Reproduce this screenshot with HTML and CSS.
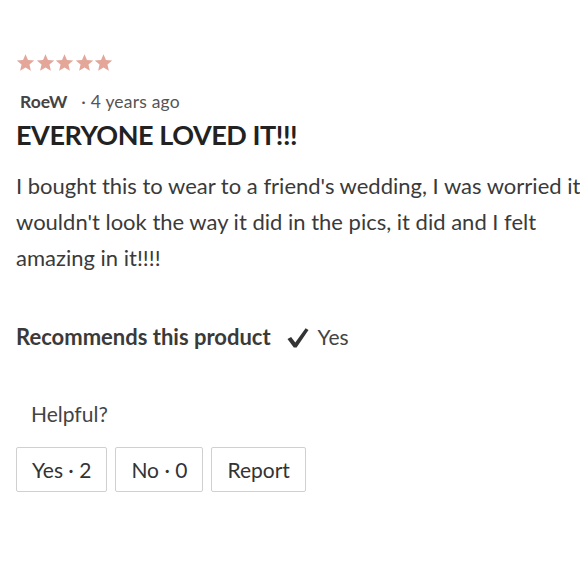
FILE: index.html
```html
<!DOCTYPE html>
<html>
<head>
<meta charset="utf-8">
<link rel="stylesheet" href="styles.css">
</head>
<body>
<div class="review">
  <div class="stars">
    <svg class="star" viewBox="0 0 24 24"><path d="M12 1.5l3.1 7.2 7.9.7-6 5.2 1.8 7.7L12 18.3l-6.8 4 1.8-7.7-6-5.2 7.9-.7z"/></svg>
    <svg class="star" viewBox="0 0 24 24"><path d="M12 1.5l3.1 7.2 7.9.7-6 5.2 1.8 7.7L12 18.3l-6.8 4 1.8-7.7-6-5.2 7.9-.7z"/></svg>
    <svg class="star" viewBox="0 0 24 24"><path d="M12 1.5l3.1 7.2 7.9.7-6 5.2 1.8 7.7L12 18.3l-6.8 4 1.8-7.7-6-5.2 7.9-.7z"/></svg>
    <svg class="star" viewBox="0 0 24 24"><path d="M12 1.5l3.1 7.2 7.9.7-6 5.2 1.8 7.7L12 18.3l-6.8 4 1.8-7.7-6-5.2 7.9-.7z"/></svg>
    <svg class="star" viewBox="0 0 24 24"><path d="M12 1.5l3.1 7.2 7.9.7-6 5.2 1.8 7.7L12 18.3l-6.8 4 1.8-7.7-6-5.2 7.9-.7z"/></svg>
  </div>
  <div class="meta"><span class="author">RoeW</span><span class="date">· 4 years ago</span></div>
  <h2 class="title">EVERYONE LOVED IT!!!</h2>
  <p class="body">I bought this to wear to a friend's wedding, I was worried it wouldn't look the way it did in the pics, it did and I felt amazing in it!!!!</p>
  <div class="recommend">
    <span class="rec-label">Recommends this product</span>
    <svg class="check" viewBox="0 0 22 20"><path d="M0.5 11l3.6-2 4.2 5.6L18.6 0.3 21.5 2 9.6 19.6 6.8 19.6z"/></svg>
    <span class="rec-yes">Yes</span>
  </div>
  <div class="helpful">Helpful?</div>
  <div class="buttons">
    <button class="btn">Yes · 2</button>
    <button class="btn">No · 0</button>
    <button class="btn">Report</button>
  </div>
</div>
</body>
</html>
```

FILE: styles.css
```css
html, body {
  margin: 0;
  padding: 0;
  background: #fff;
}
body {
  font-family: "Lato", "Liberation Sans", sans-serif;
  color: #333;
  width: 580px;
  overflow: hidden;
}
.review {
  padding: 53px 0 0 16px;
}
.stars {
  display: flex;
  gap: 0.5px;
  height: 19px;
}
.star {
  width: 19px;
  height: 19px;
  fill: #e3a699;
}
.meta {
  margin-top: 20px;
  padding-left: 4px;
  font-size: 17.5px;
  line-height: 20px;
  display: flex;
  gap: 14px;
}
.author {
  font-weight: 700;
  color: #444;
}
.date {
  color: #555;
  letter-spacing: 0.2px;
}
.title {
  margin: 7px 0 0;
  font-size: 27px;
  line-height: 32px;
  font-weight: 700;
  color: #222;
  letter-spacing: -0.45px;
}
.body {
  margin: 17px 0 0;
  font-size: 22px;
  line-height: 36px;
  color: #3a3a3a;
  width: 570px;
}
.recommend {
  margin-top: 45px;
  display: flex;
  align-items: center;
  height: 30px;
}
.rec-label {
  font-size: 22px;
  font-weight: 700;
  color: #3a3a3a;
}
.check {
  width: 22px;
  height: 20px;
  margin-left: 16px;
  margin-top: 4px;
  fill: #333;
}
.rec-yes {
  margin-left: 9px;
  font-size: 21px;
  color: #444;
}
.helpful {
  margin-top: 51px;
  padding-left: 15px;
  font-size: 21px;
  line-height: 24px;
  color: #444;
}
.buttons {
  margin-top: 21px;
  display: flex;
  gap: 8px;
}
.btn {
  height: 45px;
  padding: 0 15px;
  background: #fff;
  border: 1px solid #d0d0d0;
  border-radius: 2px;
  font-family: inherit;
  font-size: 21px;
  color: #333;
}
```
